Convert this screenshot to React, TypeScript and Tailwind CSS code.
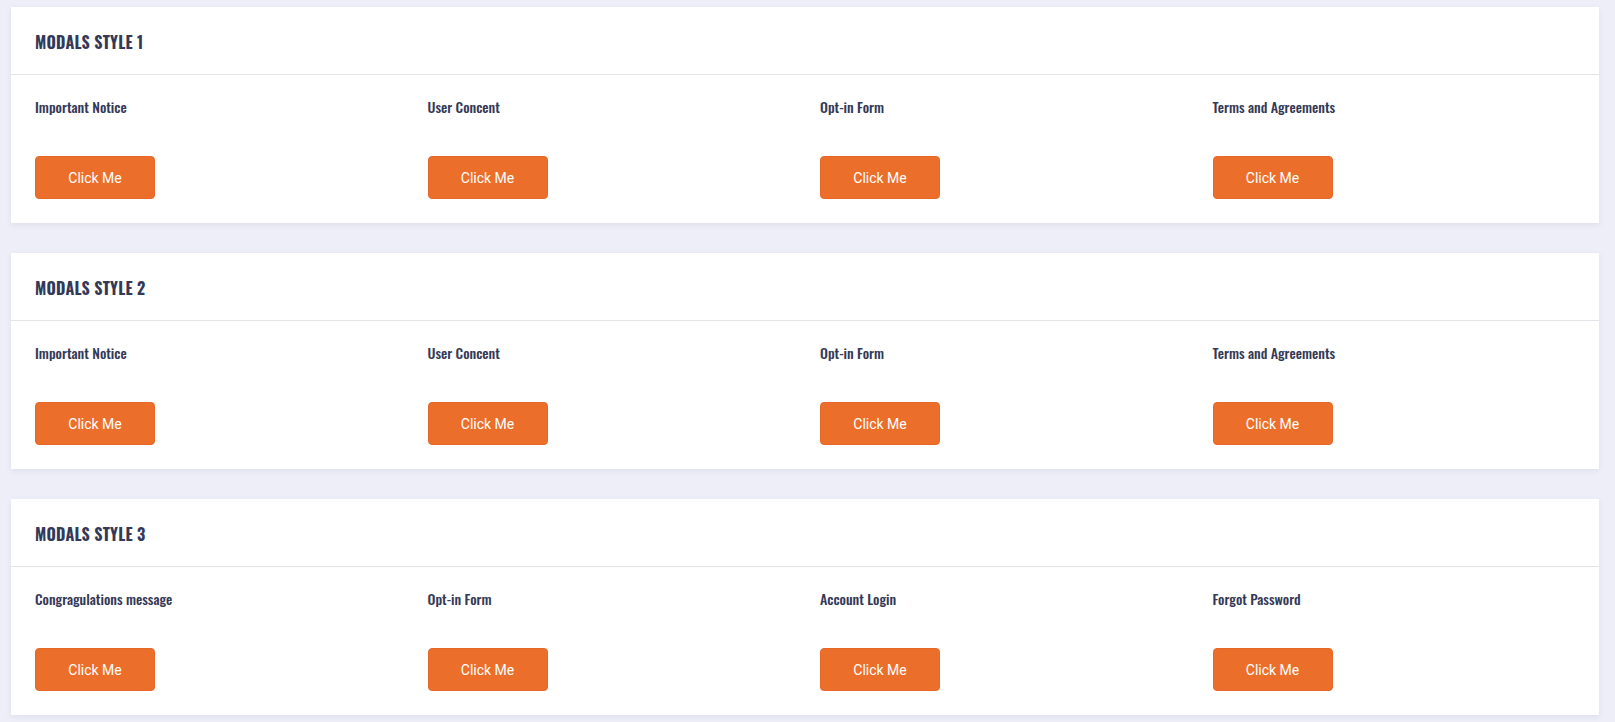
import React from "react";

const sections = [
	{ title: "MODALS STYLE 1", items: ["Important Notice", "User Concent", "Opt-in Form", "Terms and Agreements"] },
	{ title: "MODALS STYLE 2", items: ["Important Notice", "User Concent", "Opt-in Form", "Terms and Agreements"] },
	{ title: "MODALS STYLE 3", items: ["Congragulations message", "Opt-in Form", "Account Login", "Forgot Password"] },
];

const condensed = "font-['Oswald','Liberation_Sans_Narrow','DejaVu_Sans_Condensed','Roboto_Condensed',sans-serif]";

const App: React.FC = () => {
	return (
		<div className="min-h-screen bg-[#eeeef8] pl-[11px] pr-[16px] pt-[7px] pb-6">
			<div className="flex flex-col gap-[30px]">
				{sections.map((section) => (
					<div key={section.title} className="bg-white shadow-[0_2px_6px_rgba(60,60,120,0.08)]">
						{/* Header */}
						<div className="h-[68px] px-6 pt-[2px] flex items-center border-b border-[#e3e3ea]">
							<h4 className={`${condensed} text-[16px] font-bold text-[#343957] tracking-[0.2px]`}>
								{section.title}
							</h4>
						</div>

						{/* Body */}
						<div className="px-6 pt-[21px] pb-6 grid grid-cols-4 gap-x-[30px]">
							{section.items.map((item, index) => (
								<div key={index}>
									<p className={`${condensed} text-[14px] leading-[21px] font-medium text-[#343957] mb-[39px]`}>
										{item}
									</p>
									<button className="w-[120px] h-[43px] pt-[2px] rounded-[4px] bg-[#eb6f2a] text-white text-[14px] font-['Roboto',sans-serif] border border-[#e56828]">
										Click Me
									</button>
								</div>
							))}
						</div>
					</div>
				))}
			</div>
		</div>
	);
};

export default App;
